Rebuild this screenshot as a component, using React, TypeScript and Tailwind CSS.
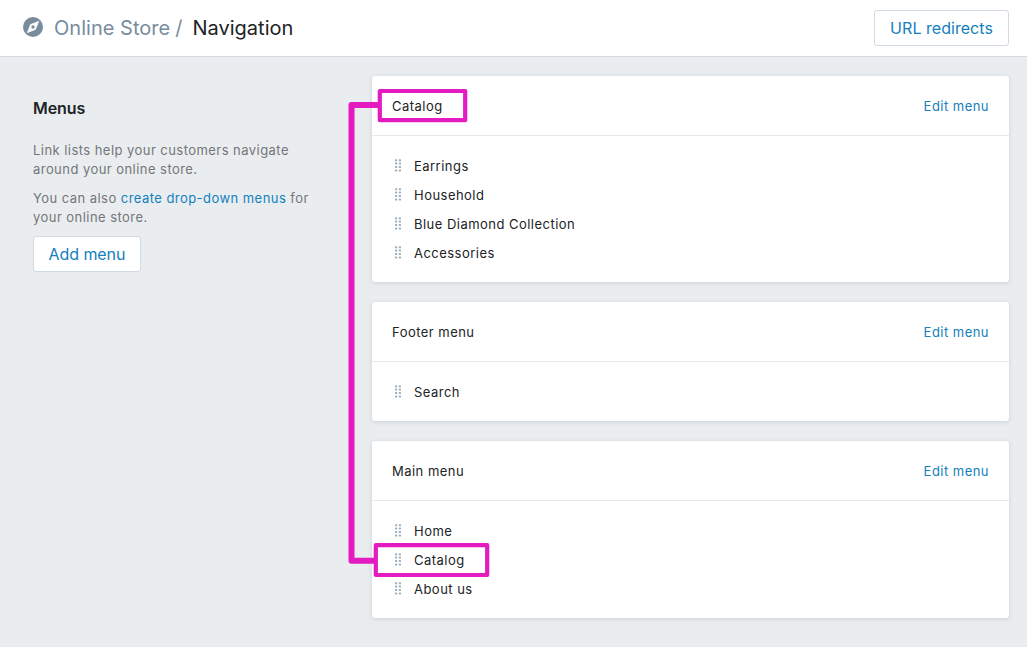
const cards = [
  { title: "Catalog", items: ["Earrings", "Household", "Blue Diamond Collection", "Accessories"] },
  { title: "Footer menu", items: ["Search"] },
  { title: "Main menu", items: ["Home", "Catalog", "About us"] },
];

function Compass() {
  return (
    <svg width="20" height="20" viewBox="0 0 20 20" aria-hidden="true" className="mb-[2px]">
      <circle cx="10" cy="10" r="10" fill="#798c9c" />
      <path d="M15.6 4.4 12.4 12.4 4.4 15.6 7.6 7.6Z" fill="#fff" stroke="#fff" strokeWidth="0.8" strokeLinejoin="round" />
      <circle cx="10" cy="10" r="1.7" fill="#798c9c" />
    </svg>
  );
}

function DragHandle() {
  return (
    <svg width="8" height="14" viewBox="0 0 8 14" aria-hidden="true" fill="#a0aebd">
      {[0.2, 3.6, 7, 10.4].map((y) => (
        <g key={y}>
          <rect x="1" y={y} width="2.2" height="2" rx="0.5" />
          <rect x="4.8" y={y} width="2.2" height="2" rx="0.5" />
        </g>
      ))}
    </svg>
  );
}

function MenuCard({ title, items }: { title: string; items: string[] }) {
  return (
    <section className="rounded-[3px] bg-white shadow-[0_1px_4px_0_rgba(63,63,68,0.16)]">
      <header className="flex h-[60px] items-center justify-between border-b border-[#e6eaed] px-5">
        <h3 className="pt-[2px]">{title}</h3>
        <a href="#" className="pt-[2px] text-[#1480bc]">Edit menu</a>
      </header>
      <ul className="py-[15px] pl-[22px]">
        {items.map((item) => (
          <li key={item} className="flex h-[29px] items-center gap-3">
            <DragHandle />
            <span className="pt-[2px]">{item}</span>
          </li>
        ))}
      </ul>
    </section>
  );
}

export default function App() {
  return (
    <div className="relative flex h-[647px] w-[1027px] flex-col overflow-hidden bg-[#e9edf0] font-['Inter',sans-serif] text-[13px] tracking-[0.47px] text-[#212326]">
      <header className="flex h-[57px] shrink-0 items-center justify-between border-b border-[#d3d9de] bg-white pl-[23px] pr-[18px]">
        <h1 className="flex items-center text-[20px] tracking-[0.02px]">
          <Compass />
          <span className="ml-[11px] text-[#798c9c]">Online Store</span>
          <span className="ml-[5px] text-[#798c9c]">/</span>
          <span className="ml-[10px]">Navigation</span>
        </h1>
        <button className="h-9 w-[135px] rounded-[3px] border border-[#d0dae2] bg-white text-[16px] tracking-[0.04px] text-[#1480bc]">URL redirects</button>
      </header>
      <main className="flex flex-1 pt-[19px] pr-[18px]">
        <aside className="w-[372px] shrink-0 pt-[20px] pl-[33px] leading-[19px] tracking-[0.45px] text-[#747678]">
          <h2 className="mb-[21px] text-[16px] leading-6 font-semibold tracking-[-0.1px] text-[#212326]">Menus</h2>
          <p className="mb-[10px]">Link lists help your customers navigate<br />around your online store.</p>
          <p className="mb-[9px]">
            You can also <a href="#" className="text-[#1480bc]">create drop-down menus</a> for<br />your online store.
          </p>
          <button className="h-9 w-[108px] rounded-[3px] border border-[#d0dae2] bg-white text-[16px] tracking-[-0.08px] text-[#1480bc]">Add menu</button>
        </aside>
        <div className="flex flex-1 flex-col gap-5">
          {cards.map((card) => (
            <MenuCard key={card.title} title={card.title} items={card.items} />
          ))}
        </div>
      </main>
      <svg className="pointer-events-none absolute inset-0" width="1027" height="647" fill="none" stroke="#e31bc0" strokeLinejoin="round" aria-hidden="true">
        <path d="M379 105H351.5V560.7H375" strokeWidth="6" />
        <rect x="379.8" y="91" width="85.4" height="29.2" strokeWidth="4.2" />
        <rect x="375.8" y="545.2" width="111.4" height="29.8" strokeWidth="4.2" />
      </svg>
    </div>
  );
}
